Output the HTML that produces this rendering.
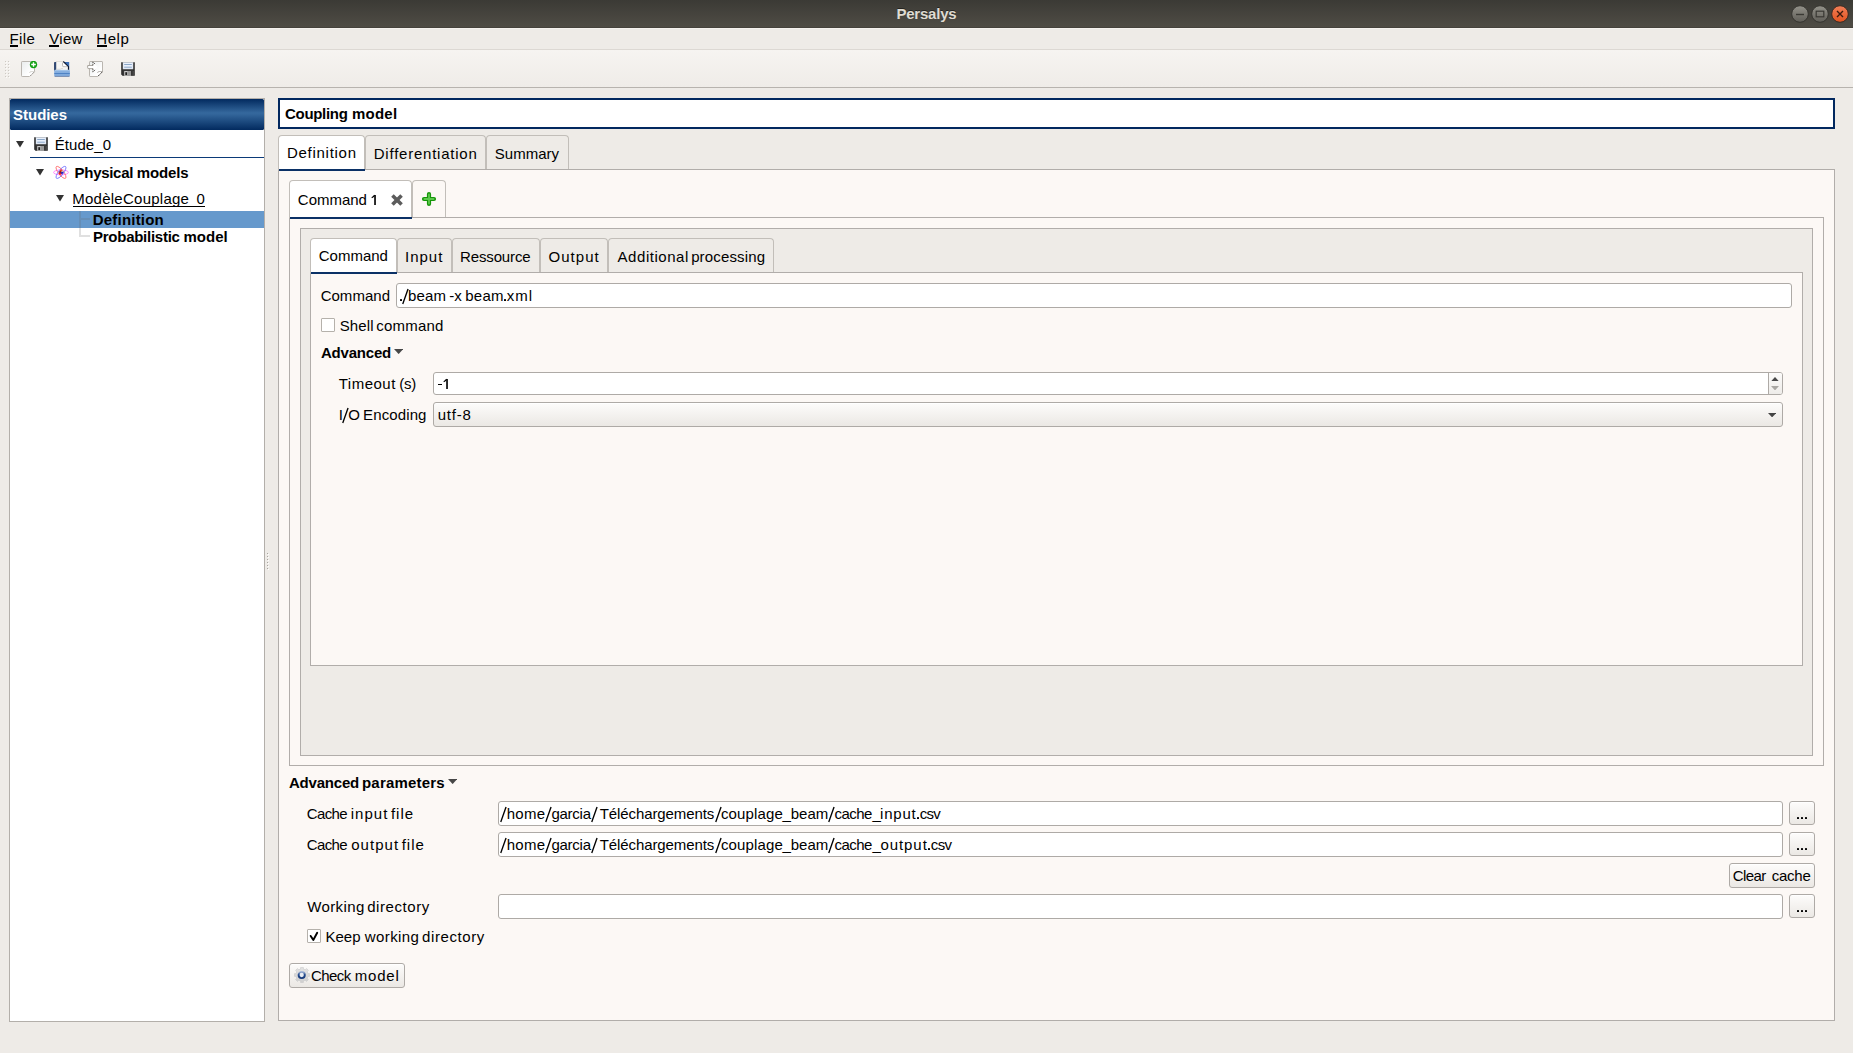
<!DOCTYPE html>
<html lang="en">
<head>
<meta charset="utf-8">
<title>Persalys</title>
<style>
html,body{margin:0;padding:0}
body{width:1853px;height:1053px;overflow:hidden;position:relative;background:#eeebe7;
 font-family:"Liberation Sans",sans-serif;font-size:15px;color:#000}
div,span,svg{position:absolute;box-sizing:border-box}
.t{white-space:pre;line-height:20px;height:20px}
.titlebar{background:linear-gradient(#3b3a35,#4f4c45);border-bottom:1px solid #45423c}
.menubar{background:#eeebe7;border-top:1px solid #f5f2ee;border-bottom:1px solid #dcd8d3}
.toolbar{background:linear-gradient(#f6f4f1,#efece8);border-bottom:1px solid #b7b3ae}
.panel{background:#fff;border:1px solid #b3afaa}
.studies-h{border-radius:1.5px;background:linear-gradient(#022a5f 0%,#34679c 44%,#34679c 48%,#022a5f 100%)}
.sel{background:#6699cc}
.title-box{background:#fff;border:2px solid #02285f}
.pane{background:#fcf8f5;border:1px solid #b1adaa}
.frame{background:#eeebe7;border:1px solid #b1adaa}
.tab{background:#eeebe7;border:1px solid #c2beb9;border-bottom:none;border-radius:4px 4px 0 0}
.tab.on{background:#fff}
.tab.plus{background:#fcf8f5}
.uline{background:#0b3166}
.edit{background:#fff;border:1px solid #aeaaa6;border-radius:3px}
.btn{border:1px solid #aeaaa6;border-radius:3px;background:linear-gradient(#fdfcfb,#ebe8e4);box-shadow:inset 0 1px 0 #fff}
.cb{background:#fff;border:1px solid #b5b1ab;border-radius:1px}
.ln{background:rgba(100,100,100,.2)}
</style>
</head>
<body>
<!-- window title bar -->
<div class="titlebar" style="left:0px;top:0px;width:1853px;height:28px;"></div>
<span class="t" style="left:896.40px;top:4px;font-size:15px;letter-spacing:-0.216px;font-weight:bold;color:#dfdbd2;text-shadow:0 -1px 0 rgba(0,0,0,.45);">Persalys</span>
<svg style="left:1788px;top:2px" width="64" height="24" viewBox="0 0 64 24">
<defs>
<linearGradient id="gb" x1="0" y1="0" x2="0" y2="1"><stop offset="0" stop-color="#94928a"/><stop offset="1" stop-color="#5f5d57"/></linearGradient>
<linearGradient id="gc" x1="0" y1="0" x2="0" y2="1"><stop offset="0" stop-color="#f17f58"/><stop offset="1" stop-color="#e3531f"/></linearGradient>
</defs>
<circle cx="12" cy="12" r="8.3" fill="url(#gb)" stroke="#35342f" stroke-width="1"/>
<circle cx="32" cy="12" r="8.3" fill="url(#gb)" stroke="#35342f" stroke-width="1"/>
<circle cx="52" cy="12" r="8.3" fill="url(#gc)" stroke="#3a2a22" stroke-width="1"/>
<path d="M8 12.5h8" stroke="#3a3934" stroke-width="1.4" fill="none"/>
<rect x="28.2" y="9.2" width="7.6" height="5.6" fill="none" stroke="#3a3934" stroke-width="1.2"/>
<path d="M49 9l6 6M55 9l-6 6" stroke="#3b1a0e" stroke-width="1.4" fill="none"/>
</svg>
<!-- menu bar -->
<div class="menubar" style="left:0px;top:28px;width:1853px;height:22px;"></div>
<span class="t" style="left:9.57px;top:29px;font-size:15px;letter-spacing:0.340px;">File</span>
<span class="t" style="left:49.14px;top:29px;font-size:15px;letter-spacing:0.360px;">View</span>
<span class="t" style="left:96.37px;top:29px;font-size:15px;letter-spacing:0.533px;">Help</span>
<div style="left:10.4px;top:45px;width:8px;height:1.6px;background:#000"></div>
<div style="left:49px;top:45px;width:10px;height:1.6px;background:#000"></div>
<div style="left:97.2px;top:45px;width:10px;height:1.6px;background:#000"></div>
<!-- tool bar -->
<div class="toolbar" style="left:0px;top:50px;width:1853px;height:38px;"></div>
<svg style="left:5px;top:61px" width="6" height="18" viewBox="0 0 6 18"><rect x="0" y="0" width="1" height="1" fill="#cdc9c3"/><rect x="1" y="1" width="1" height="1" fill="#fff" opacity=".7"/><rect x="0" y="3" width="1" height="1" fill="#cdc9c3"/><rect x="1" y="4" width="1" height="1" fill="#fff" opacity=".7"/><rect x="0" y="6" width="1" height="1" fill="#cdc9c3"/><rect x="1" y="7" width="1" height="1" fill="#fff" opacity=".7"/><rect x="0" y="9" width="1" height="1" fill="#cdc9c3"/><rect x="1" y="10" width="1" height="1" fill="#fff" opacity=".7"/><rect x="0" y="12" width="1" height="1" fill="#cdc9c3"/><rect x="1" y="13" width="1" height="1" fill="#fff" opacity=".7"/><rect x="0" y="15" width="1" height="1" fill="#cdc9c3"/><rect x="1" y="16" width="1" height="1" fill="#fff" opacity=".7"/><rect x="3" y="0" width="1" height="1" fill="#cdc9c3"/><rect x="4" y="1" width="1" height="1" fill="#fff" opacity=".7"/><rect x="3" y="3" width="1" height="1" fill="#cdc9c3"/><rect x="4" y="4" width="1" height="1" fill="#fff" opacity=".7"/><rect x="3" y="6" width="1" height="1" fill="#cdc9c3"/><rect x="4" y="7" width="1" height="1" fill="#fff" opacity=".7"/><rect x="3" y="9" width="1" height="1" fill="#cdc9c3"/><rect x="4" y="10" width="1" height="1" fill="#fff" opacity=".7"/><rect x="3" y="12" width="1" height="1" fill="#cdc9c3"/><rect x="4" y="13" width="1" height="1" fill="#fff" opacity=".7"/><rect x="3" y="15" width="1" height="1" fill="#cdc9c3"/><rect x="4" y="16" width="1" height="1" fill="#fff" opacity=".7"/></svg>
<svg style="left:21px;top:61px" width="17" height="16" viewBox="0 0 17 16">
<defs><linearGradient id="gp" x1="0" y1="0" x2="1" y2="1"><stop offset="0" stop-color="#e9ecec"/><stop offset=".7" stop-color="#fff"/></linearGradient></defs>
<path d="M1.2 .5H13Q13.5 .5 13.5 1V10.6L8.6 15.5H1.2Q.5 15.5 .5 14.8V1.2Q.5 .5 1.2 .5z" fill="url(#gp)" stroke="#bab6b0"/>
<path d="M13.5 10.6H10Q8.6 10.6 8.6 12V15.5z" fill="#fff"/>
<path d="M13.4 10.8L8.8 15.4" fill="none" stroke="#77746f" stroke-width=".9" stroke-dasharray="1.3 .9"/>
<path d="M13.5 10.6H10Q8.6 10.6 8.6 12" fill="none" stroke="#c9c5c0" stroke-width=".7"/>
<circle cx="12.5" cy="3.5" r="3.7" fill="#13a013"/>
<path d="M12.5 1.2v4.6M10.2 3.5h4.6" stroke="#fff" stroke-width="1.4" fill="none"/>
</svg>
<svg style="left:54px;top:61px" width="16" height="16" viewBox="0 0 16 16">
<defs>
<linearGradient id="gf1" x1="0" y1="0" x2="1" y2="0"><stop offset="0" stop-color="#07204f"/><stop offset=".13" stop-color="#0f3371"/><stop offset=".5" stop-color="#2f62ac"/><stop offset="1" stop-color="#3f72ba"/></linearGradient>
<linearGradient id="gf2" x1="0" y1="0" x2="0" y2="1"><stop offset="0" stop-color="#b9d6f2"/><stop offset=".22" stop-color="#88b0e0"/><stop offset="1" stop-color="#7aa5d9"/></linearGradient>
</defs>
<path d="M.2 1.8Q.2 1 1 1H15.2V10H.2z" fill="url(#gf1)"/>
<path d="M2.2 .4H9.2L14 5.2V9.6H2.2z" fill="#f5f5f4" stroke="#cfcbc5" stroke-width=".6"/>
<path d="M8.5 1.6V4.6Q8.5 5.6 9.5 5.6H13.4" fill="none" stroke="#b7b3ae" stroke-width=".9"/>
<path d="M9.2 .4V3.6Q9.2 5.2 10.8 5.2H14z" fill="#fff"/>
<path d="M9.3 .5L14.5 5.7V9" stroke="#0c1830" stroke-width="1.1" fill="none"/>
<path d="M2.6 9.4V8.3H6.2L7 7.6H9" stroke="#d2d0cc" stroke-width=".8" fill="none"/>
<rect x=".2" y="8.7" width="15.7" height="6.9" rx="1" fill="url(#gf2)"/>
<rect x=".3" y="12" width="15.5" height="1" fill="#4f83c5"/>
<rect x=".5" y="15" width="15.1" height=".9" rx=".4" fill="#7f93b4"/>
</svg>
<svg style="left:87px;top:61px" width="16" height="16" viewBox="0 0 16 16">
<path d="M3 .5H15Q15.5 .5 15.5 1V10.6L10.6 15.5H3Q2.5 15.5 2.5 14.8V1.2Q2.5 .5 3 .5z" fill="url(#gp)" stroke="#bab6b0"/>
<path d="M15.5 10.6H12Q10.6 10.6 10.6 12V15.5z" fill="#fff"/>
<path d="M15.5 10.5H12Q10.6 10.5 10.6 12" fill="none" stroke="#a9a6a1" stroke-width=".8"/>
<path d="M15.4 10.8L10.8 15.4" fill="none" stroke="#3e3c39" stroke-width="1" stroke-dasharray="1.5 .8"/>
<path d="M1 4.5H6V.9L10.6 6L6 11.1V7.6H1Q.1 6.05 1 4.5z" fill="#fff"/>
<path d="M6 4.5H1Q.1 6.05 1 4.5Q.1 6.05 1 7.6H6" fill="none" stroke="#a5a19b" stroke-width=".9"/>
<path d="M5.9 4.4V.9L8.1 3.3M5.9 7.7V11.1L8.1 8.7" fill="none" stroke="#55524e" stroke-width="1" stroke-dasharray="1.6 .8"/>
</svg>
<svg style="left:121px;top:62px" width="14" height="14" viewBox="0 0 14 14">
<path d="M.2 .2H13.8V13.8H1.6L.2 12.4z" fill="#2c2c2c"/>
<rect x="1.6" y="7" width="10.8" height="6.6" fill="#3d3d3d" opacity=".6"/>
<rect x="11.6" y="9" width="1.3" height="4" fill="#4c4c4c"/>
<rect x="2" y=".4" width="10" height="6.6" fill="#e9f0fb" stroke="#cdd5e0" stroke-width=".5"/>
<rect x="3.2" y="2" width="7.6" height="1" fill="#8ba7c8"/>
<rect x="3.2" y="4.7" width="7.6" height="1" fill="#8ba7c8"/>
<rect x="3.2" y="9" width="6.8" height="4.8" fill="#c9c9c9"/>
<rect x="6.5" y="9" width="3.5" height="4.8" fill="#9a9a9a"/>
<rect x="4.3" y="10.2" width="1.8" height="2.9" fill="#1e1e1e"/>
</svg>
<!-- studies tree -->
<div class="panel" style="left:9px;top:98px;width:256px;height:924px;"></div>
<div class="studies-h" style="left:10px;top:99px;width:254px;height:31px;"></div>
<span class="t" style="left:13.12px;top:105px;font-size:15px;letter-spacing:-0.048px;font-weight:bold;color:#fff;">Studies</span>
<svg style="left:16px;top:141px" width="8" height="6.5" viewBox="0 0 8 6.5"><path d="M0 0h8L4.0 6.5z" fill="#333"/></svg>
<svg style="left:34px;top:137px" width="14" height="14" viewBox="0 0 14 14">
<path d="M.2 .2H13.8V13.8H1.6L.2 12.4z" fill="#2c2c2c"/>
<rect x="1.6" y="7" width="10.8" height="6.6" fill="#3d3d3d" opacity=".6"/>
<rect x="11.6" y="9" width="1.3" height="4" fill="#4c4c4c"/>
<rect x="2" y=".4" width="10" height="6.6" fill="#e9f0fb" stroke="#cdd5e0" stroke-width=".5"/>
<rect x="3.2" y="2" width="7.6" height="1" fill="#8ba7c8"/>
<rect x="3.2" y="4.7" width="7.6" height="1" fill="#8ba7c8"/>
<rect x="3.2" y="9" width="6.8" height="4.8" fill="#c9c9c9"/>
<rect x="6.5" y="9" width="3.5" height="4.8" fill="#9a9a9a"/>
<rect x="4.3" y="10.2" width="1.8" height="2.9" fill="#1e1e1e"/>
</svg>
<span class="t" style="left:54.67px;top:135px;font-size:15px;letter-spacing:0.072px;">Étude_0</span>
<div style="left:30px;top:157px;width:234px;height:1px;background:#0b3a78"></div>
<svg style="left:36px;top:169px" width="8" height="6.5" viewBox="0 0 8 6.5"><path d="M0 0h8L4.0 6.5z" fill="#333"/></svg>
<svg style="left:53px;top:165px" width="16" height="15" viewBox="0 0 16 15">
<g fill="none" stroke-width=".75">
<ellipse cx="8" cy="7.4" rx="7.4" ry="2.5" stroke="#ff62ff"/>
<ellipse cx="8" cy="7.4" rx="7.4" ry="2.5" stroke="#ff5555" transform="rotate(52 8 7.4)"/>
<ellipse cx="8" cy="7.4" rx="7.4" ry="2.5" stroke="#6060ff" transform="rotate(-52 8 7.4)"/>
</g>
<circle cx="7.4" cy="8.3" r="1.5" fill="#e8201a"/>
<circle cx="9" cy="7.6" r="1.4" fill="#2222c8"/>
<circle cx="8.1" cy="5.9" r="1.3" fill="#f03a18"/>
<circle cx="7" cy="6.9" r=".9" fill="#7a0a30"/>
<circle cx="9.2" cy="6.2" r=".7" fill="#8fe6f0"/>
</svg>
<span class="t" style="left:74.60px;top:163px;font-size:15px;letter-spacing:-0.301px;font-weight:bold;">Physical</span><span class="t" style="left:136.82px;top:163px;font-size:15px;letter-spacing:-0.124px;font-weight:bold;">models</span>
<svg style="left:56.3px;top:195.3px" width="8" height="6.5" viewBox="0 0 8 6.5"><path d="M0 0h8L4.0 6.5z" fill="#333"/></svg>
<span class="t" style="left:72.22px;top:189px;font-size:15px;letter-spacing:0.256px;">ModèleCouplage</span><span class="t" style="left:189.43px;top:189px;font-size:15px;letter-spacing:-1.230px;">_0</span>
<div style="left:73.3px;top:206px;width:131.3px;height:1px;background:#000"></div>
<div class="sel" style="left:10px;top:211px;width:254px;height:17px;"></div>
<div class="ln" style="left:79px;top:211px;width:2px;height:26px;"></div>
<div class="ln" style="left:81px;top:218px;width:9px;height:2px;"></div>
<div class="ln" style="left:81px;top:235px;width:9px;height:2px;"></div>
<span class="t" style="left:92.75px;top:210px;font-size:15px;letter-spacing:0.202px;font-weight:bold;">Definition</span>
<span class="t" style="left:93.00px;top:227px;font-size:15px;letter-spacing:-0.258px;font-weight:bold;">Probabilistic</span><span class="t" style="left:183.42px;top:227px;font-size:15px;letter-spacing:0.040px;font-weight:bold;">model</span>
<svg style="left:267px;top:553px" width="2" height="18" viewBox="0 0 2 18"><rect x="0" y="0" width="1" height="1" fill="#a9a6a1"/><rect x="1" y="1" width="1" height="1" fill="#fff"/><rect x="0" y="3" width="1" height="1" fill="#a9a6a1"/><rect x="1" y="4" width="1" height="1" fill="#fff"/><rect x="0" y="6" width="1" height="1" fill="#a9a6a1"/><rect x="1" y="7" width="1" height="1" fill="#fff"/><rect x="0" y="9" width="1" height="1" fill="#a9a6a1"/><rect x="1" y="10" width="1" height="1" fill="#fff"/><rect x="0" y="12" width="1" height="1" fill="#a9a6a1"/><rect x="1" y="13" width="1" height="1" fill="#fff"/><rect x="0" y="15" width="1" height="1" fill="#a9a6a1"/><rect x="1" y="16" width="1" height="1" fill="#fff"/></svg>
<!-- coupling model window -->
<div class="title-box" style="left:278px;top:98px;width:1557px;height:31px;"></div>
<span class="t" style="left:284.99px;top:104px;font-size:15px;letter-spacing:-0.296px;font-weight:bold;">Coupling</span><span class="t" style="left:352.02px;top:104px;font-size:15px;letter-spacing:0.215px;font-weight:bold;">model</span>
<div class="pane" style="left:278px;top:169px;width:1557px;height:852px;"></div>
<div class="tab on" style="left:278px;top:135px;width:87px;height:35px;"></div>
<div class="tab" style="left:365px;top:135px;width:121px;height:34px;"></div>
<div class="tab" style="left:486px;top:135px;width:83px;height:34px;"></div>
<div class="uline" style="left:279px;top:169px;width:86px;height:2px;"></div>
<span class="t" style="left:286.97px;top:143px;font-size:15px;letter-spacing:0.719px;">Definition</span>
<span class="t" style="left:373.77px;top:144px;font-size:15px;letter-spacing:0.766px;">Differentiation</span>
<span class="t" style="left:494.82px;top:144px;font-size:15px;letter-spacing:0.020px;">Summary</span>
<div class="pane" style="left:289px;top:217px;width:1535px;height:549px;"></div>
<div class="tab on" style="left:289px;top:180px;width:123px;height:38px;"></div>
<div class="tab plus" style="left:412px;top:180px;width:34px;height:37px;"></div>
<div class="uline" style="left:290px;top:217px;width:122px;height:2px;"></div>
<span class="t" style="left:297.84px;top:190px;font-size:15px;letter-spacing:-0.012px;">Command</span><svg style="left:370.20px;top:194px" width="7" height="12" viewBox="0 0 7 12"><path d="M4.2 1h1.65v10h-1.65z" fill="#000"/><path d="M1.7 3.8Q3.3 3 4.6 1.2" stroke="#000" stroke-width="1.15" fill="none"/></svg>
<svg style="left:391px;top:194px" width="12" height="12" viewBox="0 0 12 12"><path d="M1.45 1.45L10.55 10.55M10.55 1.45L1.45 10.55" stroke="#5c5c5c" stroke-width="3.6" fill="none"/></svg>
<svg style="left:421px;top:191px" width="16" height="16" viewBox="0 0 16 16">
<path d="M8 3v10M3 8h10" stroke="#16960a" stroke-width="4.2" stroke-linecap="round" fill="none"/>
<path d="M8 3.4v9.2M3.4 8h9.2" stroke="#5cc84c" stroke-width="1.8" stroke-linecap="round" fill="none"/>
</svg>
<div class="frame" style="left:300px;top:228px;width:1513px;height:528px;"></div>
<div class="pane" style="left:310px;top:272px;width:1493px;height:394px;"></div>
<div class="tab on" style="left:310px;top:238px;width:87px;height:35px;"></div>
<span class="t" style="left:318.74px;top:246px;font-size:15px;letter-spacing:0.005px;">Command</span>
<div class="tab" style="left:397px;top:238px;width:55px;height:34px;"></div>
<span class="t" style="left:405.12px;top:247px;font-size:15px;letter-spacing:0.957px;">Input</span>
<div class="tab" style="left:452px;top:238px;width:88px;height:34px;"></div>
<span class="t" style="left:459.97px;top:247px;font-size:15px;letter-spacing:-0.125px;">Ressource</span>
<div class="tab" style="left:540px;top:238px;width:68px;height:34px;"></div>
<span class="t" style="left:548.59px;top:247px;font-size:15px;letter-spacing:1.018px;">Output</span>
<div class="tab" style="left:608px;top:238px;width:166px;height:34px;"></div>
<span class="t" style="left:617.58px;top:247px;font-size:15px;letter-spacing:0.538px;">Additional</span><span class="t" style="left:691.14px;top:247px;font-size:15px;letter-spacing:0.153px;">processing</span>
<div class="uline" style="left:311px;top:272px;width:86px;height:2px;"></div>
<span class="t" style="left:320.64px;top:286px;font-size:15px;letter-spacing:0.030px;">Command</span>
<div class="edit" style="left:396px;top:283px;width:1396px;height:25px;"></div>
<div style="left:399.60px;top:298.8px;width:2.3px;height:2.2px;background:#000;border-radius:.6px"></div><svg style="left:400.90px;top:288px" width="9" height="17" viewBox="0 0 9 17"><path d="M1.75 16L7.05 1" stroke="#000" stroke-width="1.35" fill="none"/></svg><div style="left:503.75px;top:298.8px;width:2.3px;height:2.2px;background:#000;border-radius:.6px"></div>
<span class="t" style="left:408.04px;top:286px;font-size:15px;letter-spacing:0.173px;">beam</span><span class="t" style="left:449.34px;top:286px;font-size:15px;letter-spacing:-0.080px;">-x</span><span class="t" style="left:465.14px;top:286px;font-size:15px;letter-spacing:0.307px;">beam</span><span class="t" style="left:506.74px;top:286px;font-size:15px;letter-spacing:1.065px;">xml</span>
<div class="cb" style="left:321px;top:318px;width:14px;height:14px;"></div>
<span class="t" style="left:339.72px;top:316px;font-size:15px;letter-spacing:0.108px;">Shell</span><span class="t" style="left:376.37px;top:316px;font-size:15px;letter-spacing:0.205px;">command</span>
<span class="t" style="left:320.98px;top:343px;font-size:15px;letter-spacing:-0.199px;font-weight:bold;">Advanced</span>
<svg style="left:393.8px;top:349px" width="9.3" height="5.1" viewBox="0 0 9.3 5.1"><path d="M0 0h9.3L4.65 5.1z" fill="#474747"/></svg>
<span class="t" style="left:338.77px;top:374px;font-size:15px;letter-spacing:0.485px;">Timeout</span><span class="t" style="left:399.27px;top:374px;font-size:15px;letter-spacing:-0.270px;">(s)</span>
<div class="edit" style="left:433px;top:372px;width:1350px;height:23px;overflow:hidden"><div style="right:0;top:0;width:14px;height:21px;border-left:1px solid #aeaaa6;background:linear-gradient(#fcfbfa,#eeece9)"></div></div>
<svg style="left:1771px;top:385.8px" width="8" height="4.4" viewBox="0 0 8 4.4"><path d="M0 0h8L4.0 4.4z" fill="#a9a7a3"/></svg>
<svg style="left:1771px;top:376.7px" width="8" height="4.4" viewBox="0 0 8 4.4"><path d="M0 4.4h8L4 0z" fill="#484848"/></svg>
<div style="left:438px;top:383.8px;width:4.2px;height:1.4px;background:#000"></div><svg style="left:442.40px;top:378px" width="7" height="12" viewBox="0 0 7 12"><path d="M4.2 1h1.65v10h-1.65z" fill="#000"/><path d="M1.7 3.8Q3.3 3 4.6 1.2" stroke="#000" stroke-width="1.15" fill="none"/></svg>
<svg style="left:341.20px;top:407px" width="9" height="17" viewBox="0 0 9 17"><path d="M1.75 16L7.05 1" stroke="#000" stroke-width="1.35" fill="none"/></svg>
<span class="t" style="left:338.84px;top:405px;font-size:15px;">I</span><span class="t" style="left:348.37px;top:405px;font-size:15px;">O</span><span class="t" style="left:363.07px;top:405px;font-size:15px;letter-spacing:0.120px;">Encoding</span>
<div class="btn" style="left:433px;top:402px;width:1350px;height:25px;"></div>
<span class="t" style="left:437.63px;top:405px;font-size:15px;letter-spacing:0.775px;">utf-8</span>
<svg style="left:1768px;top:413px" width="8.2" height="4.4" viewBox="0 0 8.2 4.4"><path d="M0 0h8.2L4.1 4.4z" fill="#444"/></svg>
<!-- advanced parameters -->
<span class="t" style="left:288.98px;top:773px;font-size:15px;letter-spacing:-0.199px;font-weight:bold;">Advanced</span><span class="t" style="left:362.02px;top:773px;font-size:15px;letter-spacing:0.190px;font-weight:bold;">parameters</span>
<svg style="left:447.7px;top:779px" width="9.3" height="5.1" viewBox="0 0 9.3 5.1"><path d="M0 0h9.3L4.65 5.1z" fill="#474747"/></svg>
<span class="t" style="left:306.74px;top:804px;font-size:15px;letter-spacing:-0.610px;">Cache</span><span class="t" style="left:350.80px;top:804px;font-size:15px;letter-spacing:0.995px;">input</span><span class="t" style="left:390.89px;top:804px;font-size:15px;letter-spacing:1.033px;">file</span>
<div class="edit" style="left:498px;top:801px;width:1285px;height:25px;"></div>
<div class="btn" style="left:1789px;top:801px;width:26px;height:24px;"></div>
<div style="left:1796.80px;top:816.8px;width:2.3px;height:2.2px;background:#000;border-radius:.6px"></div><div style="left:1800.75px;top:816.8px;width:2.3px;height:2.2px;background:#000;border-radius:.6px"></div><div style="left:1804.70px;top:816.8px;width:2.3px;height:2.2px;background:#000;border-radius:.6px"></div>
<span class="t" style="left:306.74px;top:835px;font-size:15px;letter-spacing:-0.610px;">Cache</span><span class="t" style="left:351.18px;top:835px;font-size:15px;letter-spacing:1.044px;">output</span><span class="t" style="left:401.69px;top:835px;font-size:15px;letter-spacing:1.000px;">file</span>
<div class="edit" style="left:498px;top:832px;width:1285px;height:25px;"></div>
<div class="btn" style="left:1789px;top:832px;width:26px;height:24px;"></div>
<div style="left:1796.80px;top:847.8px;width:2.3px;height:2.2px;background:#000;border-radius:.6px"></div><div style="left:1800.75px;top:847.8px;width:2.3px;height:2.2px;background:#000;border-radius:.6px"></div><div style="left:1804.70px;top:847.8px;width:2.3px;height:2.2px;background:#000;border-radius:.6px"></div>
<span class="t" style="left:307.24px;top:897px;font-size:15px;letter-spacing:0.380px;">Working</span><span class="t" style="left:367.18px;top:897px;font-size:15px;letter-spacing:0.577px;">directory</span>
<div class="edit" style="left:498px;top:894px;width:1285px;height:25px;"></div>
<div class="btn" style="left:1789px;top:894px;width:26px;height:24px;"></div>
<div style="left:1796.80px;top:909.8px;width:2.3px;height:2.2px;background:#000;border-radius:.6px"></div><div style="left:1800.75px;top:909.8px;width:2.3px;height:2.2px;background:#000;border-radius:.6px"></div><div style="left:1804.70px;top:909.8px;width:2.3px;height:2.2px;background:#000;border-radius:.6px"></div>
<svg style="left:499.40px;top:806px" width="9" height="17" viewBox="0 0 9 17"><path d="M1.75 16L7.05 1" stroke="#000" stroke-width="1.35" fill="none"/></svg><svg style="left:543.80px;top:806px" width="9" height="17" viewBox="0 0 9 17"><path d="M1.75 16L7.05 1" stroke="#000" stroke-width="1.35" fill="none"/></svg><svg style="left:590.40px;top:806px" width="9" height="17" viewBox="0 0 9 17"><path d="M1.75 16L7.05 1" stroke="#000" stroke-width="1.35" fill="none"/></svg><svg style="left:714.00px;top:806px" width="9" height="17" viewBox="0 0 9 17"><path d="M1.75 16L7.05 1" stroke="#000" stroke-width="1.35" fill="none"/></svg><svg style="left:827.10px;top:806px" width="9" height="17" viewBox="0 0 9 17"><path d="M1.75 16L7.05 1" stroke="#000" stroke-width="1.35" fill="none"/></svg>
<svg style="left:499.40px;top:837px" width="9" height="17" viewBox="0 0 9 17"><path d="M1.75 16L7.05 1" stroke="#000" stroke-width="1.35" fill="none"/></svg><svg style="left:543.80px;top:837px" width="9" height="17" viewBox="0 0 9 17"><path d="M1.75 16L7.05 1" stroke="#000" stroke-width="1.35" fill="none"/></svg><svg style="left:590.40px;top:837px" width="9" height="17" viewBox="0 0 9 17"><path d="M1.75 16L7.05 1" stroke="#000" stroke-width="1.35" fill="none"/></svg><svg style="left:714.00px;top:837px" width="9" height="17" viewBox="0 0 9 17"><path d="M1.75 16L7.05 1" stroke="#000" stroke-width="1.35" fill="none"/></svg><svg style="left:827.10px;top:837px" width="9" height="17" viewBox="0 0 9 17"><path d="M1.75 16L7.05 1" stroke="#000" stroke-width="1.35" fill="none"/></svg>
<span class="t" style="left:506.66px;top:804px;font-size:15px;letter-spacing:0.293px;">home</span><span class="t" style="left:551.48px;top:804px;font-size:15px;letter-spacing:-0.268px;">garcia</span><span class="t" style="left:599.77px;top:804px;font-size:15px;letter-spacing:-0.094px;">Téléchargements</span><span class="t" style="left:720.97px;top:804px;font-size:15px;letter-spacing:0.130px;">couplage</span><span class="t" style="left:782.46px;top:804px;font-size:15px;">_</span><span class="t" style="left:790.74px;top:804px;font-size:15px;letter-spacing:0.007px;">beam</span><span class="t" style="left:834.47px;top:804px;font-size:15px;letter-spacing:-0.508px;">cache</span><span class="t" style="left:872.56px;top:804px;font-size:15px;">_</span><span class="t" style="left:880.10px;top:804px;font-size:15px;letter-spacing:0.770px;">input</span><span class="t" style="left:919.77px;top:804px;font-size:15px;letter-spacing:-0.710px;">csv</span><div style="left:917.00px;top:816.8px;width:2.3px;height:2.2px;background:#000;border-radius:.6px"></div>
<span class="t" style="left:506.66px;top:835px;font-size:15px;letter-spacing:0.293px;">home</span><span class="t" style="left:551.48px;top:835px;font-size:15px;letter-spacing:-0.268px;">garcia</span><span class="t" style="left:599.77px;top:835px;font-size:15px;letter-spacing:-0.094px;">Téléchargements</span><span class="t" style="left:720.97px;top:835px;font-size:15px;letter-spacing:0.130px;">couplage</span><span class="t" style="left:782.46px;top:835px;font-size:15px;">_</span><span class="t" style="left:790.74px;top:835px;font-size:15px;letter-spacing:0.007px;">beam</span><span class="t" style="left:834.47px;top:835px;font-size:15px;letter-spacing:-0.508px;">cache</span><span class="t" style="left:872.56px;top:835px;font-size:15px;">_</span><span class="t" style="left:880.48px;top:835px;font-size:15px;letter-spacing:0.924px;">output</span><span class="t" style="left:930.77px;top:835px;font-size:15px;letter-spacing:-0.610px;">csv</span><div style="left:928.00px;top:847.8px;width:2.3px;height:2.2px;background:#000;border-radius:.6px"></div>
<div class="btn" style="left:1729px;top:863px;width:86px;height:25px;"></div>
<span class="t" style="left:1732.74px;top:866px;font-size:15px;letter-spacing:-0.560px;">Clear</span><span class="t" style="left:1771.77px;top:866px;font-size:15px;letter-spacing:-0.258px;">cache</span>
<div class="cb" style="left:307px;top:929px;width:14px;height:14px;"></div>
<svg style="left:307px;top:929px" width="14" height="14" viewBox="0 0 14 14"><path d="M3.7 6.9L6.3 11L10.2 3.8" stroke="#000" stroke-width="1.9" stroke-linecap="round" stroke-linejoin="round" fill="none"/></svg>
<span class="t" style="left:325.57px;top:927px;font-size:15px;letter-spacing:-0.027px;">Keep</span><span class="t" style="left:364.73px;top:927px;font-size:15px;letter-spacing:0.425px;">working</span><span class="t" style="left:422.08px;top:927px;font-size:15px;letter-spacing:0.577px;">directory</span>
<div class="btn" style="left:289px;top:963px;width:116px;height:25px;"></div>
<svg style="left:294px;top:967px" width="16" height="16" viewBox="0 0 16 16"><defs><linearGradient id="gg" x1="0" y1="0" x2="0" y2="1"><stop offset="0" stop-color="#e4e4e4"/><stop offset="1" stop-color="#cfcfcf"/></linearGradient><linearGradient id="gr" x1="0" y1="0" x2="0" y2="1"><stop offset="0" stop-color="#a3b6d7"/><stop offset=".45" stop-color="#234a8c"/><stop offset="1" stop-color="#173b7c"/></linearGradient></defs><path d="M6.55 2.07L6.74 0.20L9.26 0.20L9.45 2.07L11.16 2.78L12.62 1.60L14.40 3.38L13.22 4.84L13.93 6.55L15.80 6.74L15.80 9.26L13.93 9.45L13.22 11.16L14.40 12.62L12.62 14.40L11.16 13.22L9.45 13.93L9.26 15.80L6.74 15.80L6.55 13.93L4.84 13.22L3.38 14.40L1.60 12.62L2.78 11.16L2.07 9.45L0.20 9.26L0.20 6.74L2.07 6.55L2.78 4.84L1.60 3.38L3.38 1.60L4.84 2.78z" fill="url(#gg)" stroke="#c9c9c9" stroke-width=".6" stroke-linejoin="round"/><circle cx="7.7" cy="8" r="3.1" fill="#e9edf3" stroke="url(#gr)" stroke-width="1.9"/></svg>
<span class="t" style="left:310.94px;top:966px;font-size:15px;letter-spacing:-0.573px;">Check</span><span class="t" style="left:354.81px;top:966px;font-size:15px;letter-spacing:0.785px;">model</span>
</body>
</html>
